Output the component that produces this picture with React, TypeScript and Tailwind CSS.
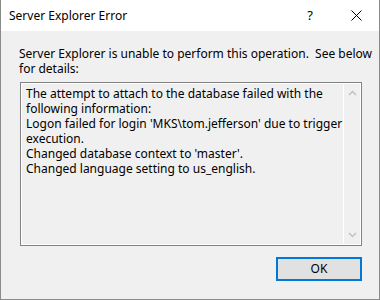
export default function App() {
  return (
    <div
      className="w-[380px] h-[300px] bg-[#f0f0f0] border-x border-b border-[#8a8a8a] flex flex-col text-[12px] text-black"
      style={{ fontFamily: '"Noto Sans", "Open Sans", sans-serif' }}
    >
      <div className="h-[31px] bg-white flex items-center shrink-0">
        <div className="pl-[8px] flex-1 leading-none">Server Explorer Error</div>
        <div className="w-[46px] h-full flex items-center justify-center text-[13px]">?</div>
        <div className="w-[46px] h-full flex items-center justify-center">
          <svg width="11" height="11" viewBox="0 0 11 11">
            <path d="M0.5 0.5 L10.5 10.5 M10.5 0.5 L0.5 10.5" stroke="#000" strokeWidth="1" />
          </svg>
        </div>
      </div>

      <div className="flex-1 flex flex-col pl-[18px] pr-[18px] pt-[15px]">
        <p className="leading-[15px] whitespace-nowrap">
          Server Explorer is unable to perform this operation.&nbsp; See below
          <br />
          for details:
        </p>

        <div className="mt-[6px] ml-[1px] w-[342px] h-[164px] border border-[#828282] flex">
          <div className="flex-1 flex border border-white">
            <div className="flex-1 pl-[4px] pt-[2px] leading-[15px] whitespace-nowrap">
              The attempt to attach to the database failed with the
              <br />
              following information:
              <br />
              Logon failed for login 'MKS\tom.jefferson' due to trigger
              <br />
              execution.
              <br />
              Changed database context to 'master'.
              <br />
              Changed language setting to us_english.
            </div>
            <div className="w-[17px] border-l border-white flex flex-col justify-between items-center py-[6px]">
              <svg width="9" height="6" viewBox="0 0 9 6">
                <path d="M1 5 L4.5 1.5 L8 5" fill="none" stroke="#c2c2c2" strokeWidth="1.5" />
              </svg>
              <svg width="9" height="6" viewBox="0 0 9 6">
                <path d="M1 1 L4.5 4.5 L8 1" fill="none" stroke="#c2c2c2" strokeWidth="1.5" />
              </svg>
            </div>
          </div>
        </div>

        <div className="mt-[11px] flex justify-end w-[343px]">
          <button className="w-[86px] h-[24px] border-2 border-[#0078d7] bg-[#e1e1e1] flex items-center justify-center leading-none">
            OK
          </button>
        </div>
      </div>
    </div>
  );
}
